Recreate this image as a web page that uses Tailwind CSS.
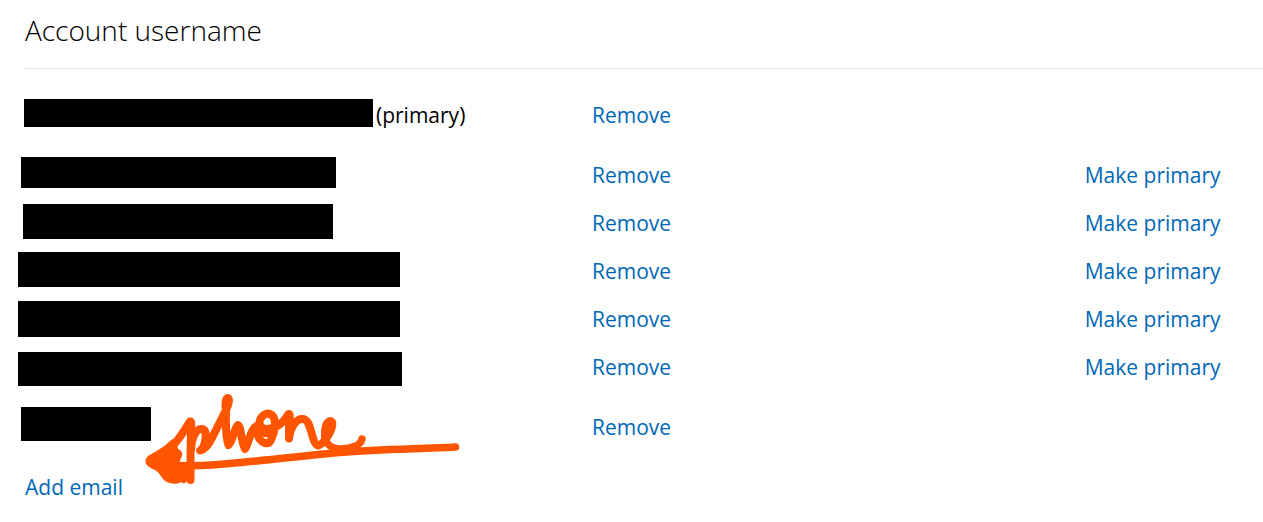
<!DOCTYPE html>
<html lang="en">
<head>
<meta charset="utf-8">
<meta name="viewport" content="width=device-width, initial-scale=1">
<title>Account username</title>
<script src="https://cdn.jsdelivr.net/npm/@tailwindcss/browser@4"></script>
</head>
<body class="bg-white font-['Open_Sans','Noto_Sans',sans-serif] text-[21px] leading-6 text-black">
<main class="relative pl-[25px]">
  <h1 class="border-b border-[#e3e3e3] pt-3 pb-5 text-[28px] leading-9 font-[340]">Account username</h1>
  <table class="mt-[22px] w-full table-fixed border-collapse text-left">
    <colgroup><col class="w-[45.8%]"><col class="w-[39.8%]"><col></colgroup>
    <tbody>
      <tr class="h-[60px] align-top">
        <td class="pt-2"><div class="-ml-px flex gap-[3px]"><span class="h-7 w-[349px] bg-black"></span><span class="pt-1">(primary)</span></div></td>
        <td class="pt-3"><a href="#" class="text-[#0067b8]">Remove</a></td>
        <td></td>
      </tr>
      <tr class="h-12 align-top">
        <td class="pt-[6px]"><div class="-ml-1 h-[31px] w-[315px] bg-black"></div></td>
        <td class="pt-3"><a href="#" class="text-[#0067b8]">Remove</a></td>
        <td class="pt-3"><a href="#" class="text-[#0067b8]">Make primary</a></td>
      </tr>
      <tr class="h-12 align-top">
        <td class="pt-[5px]"><div class="-ml-[2px] h-[35px] w-[310px] bg-black"></div></td>
        <td class="pt-3"><a href="#" class="text-[#0067b8]">Remove</a></td>
        <td class="pt-3"><a href="#" class="text-[#0067b8]">Make primary</a></td>
      </tr>
      <tr class="h-12 align-top">
        <td class="pt-[5px]"><div class="-ml-[7px] h-[35px] w-[382px] bg-black"></div></td>
        <td class="pt-3"><a href="#" class="text-[#0067b8]">Remove</a></td>
        <td class="pt-3"><a href="#" class="text-[#0067b8]">Make primary</a></td>
      </tr>
      <tr class="h-12 align-top">
        <td class="pt-[6px]"><div class="-ml-[7px] h-9 w-[382px] bg-black"></div></td>
        <td class="pt-3"><a href="#" class="text-[#0067b8]">Remove</a></td>
        <td class="pt-3"><a href="#" class="text-[#0067b8]">Make primary</a></td>
      </tr>
      <tr class="h-[60px] align-top">
        <td class="pt-[9px]"><div class="-ml-[7px] h-[34px] w-[384px] bg-black"></div></td>
        <td class="pt-3"><a href="#" class="text-[#0067b8]">Remove</a></td>
        <td class="pt-3"><a href="#" class="text-[#0067b8]">Make primary</a></td>
      </tr>
      <tr class="h-[60px] align-top">
        <td class="pt-1"><div class="-ml-1 h-[34px] w-[130px] bg-black"></div></td>
        <td class="pt-3"><a href="#" class="text-[#0067b8]">Remove</a></td>
        <td></td>
      </tr>
    </tbody>
  </table>
  <p class="py-3"><a href="#" class="text-[#0067b8]">Add email</a></p>

  <!-- Handwritten note and arrow over the phone row -->
  <svg class="pointer-events-none absolute top-[390px] left-[140px]" width="325" height="100" viewBox="140 390 325 100" fill="none" stroke="#ff5500" stroke-width="8" stroke-linecap="round" stroke-linejoin="round" role="img" aria-label="phone">
    <path d="M145.500 461C146 456 150 455 155 452C160 449 166 445 170 441C172 438 176 439 177 442L178 449C181 450 183 453 182 456L179 463L187 463L187 480C186 484 183 484 181 482C177 485 170 484 165 481C161 477 159 472 155 470C150 468 145 465 145.500 461Z" fill="#ff5500" stroke="none"/>
    <path d="M173 445C180 439 186 427 190 421.500C192 421 191 425 191 431L190.500 456L190.500 480"/>
    <path d="M191 449C192 437 196 429 201 429C207 428 206 436 205 442C204 446 203 449 200 450.500C205 450 209 444 212 438L226 410C229 404 230 398 227.500 398C225 399 225 404 226 411C226 420 225 436 228.500 445C233 441 234 428 238 425C241 426 241 441 245 449C249 443 250 431 255 427C260 423 257 431 258 436C261 443 268 446 271 440C275 432 277 420 272 415C266 411 259 417 259.500 424C261 429 266 430 272 428C279 427 285 420 288.500 414C291 414 289 419 289 426L289 438.500C290 429 295 420 301 419C307 418 309 424 311 431C313 438 315 445 318 445.500C324 444 334 429 332 422C329 419 325 424 325.500 432L325 437"/>
    <path d="M325 430C324 440 327 449 341 449C352 449 361 445 362 439" stroke-width="7.500"/>
    <path d="M258 425C259 431 263 435 269 434" stroke-width="6"/>
    <path d="M180 465.500C205 467 225 464 250 461.500C280 459 310 455 340 452.500C380 449 420 449 455.500 447" stroke-width="7.500"/>
  </svg>
</main>
</body>
</html>
